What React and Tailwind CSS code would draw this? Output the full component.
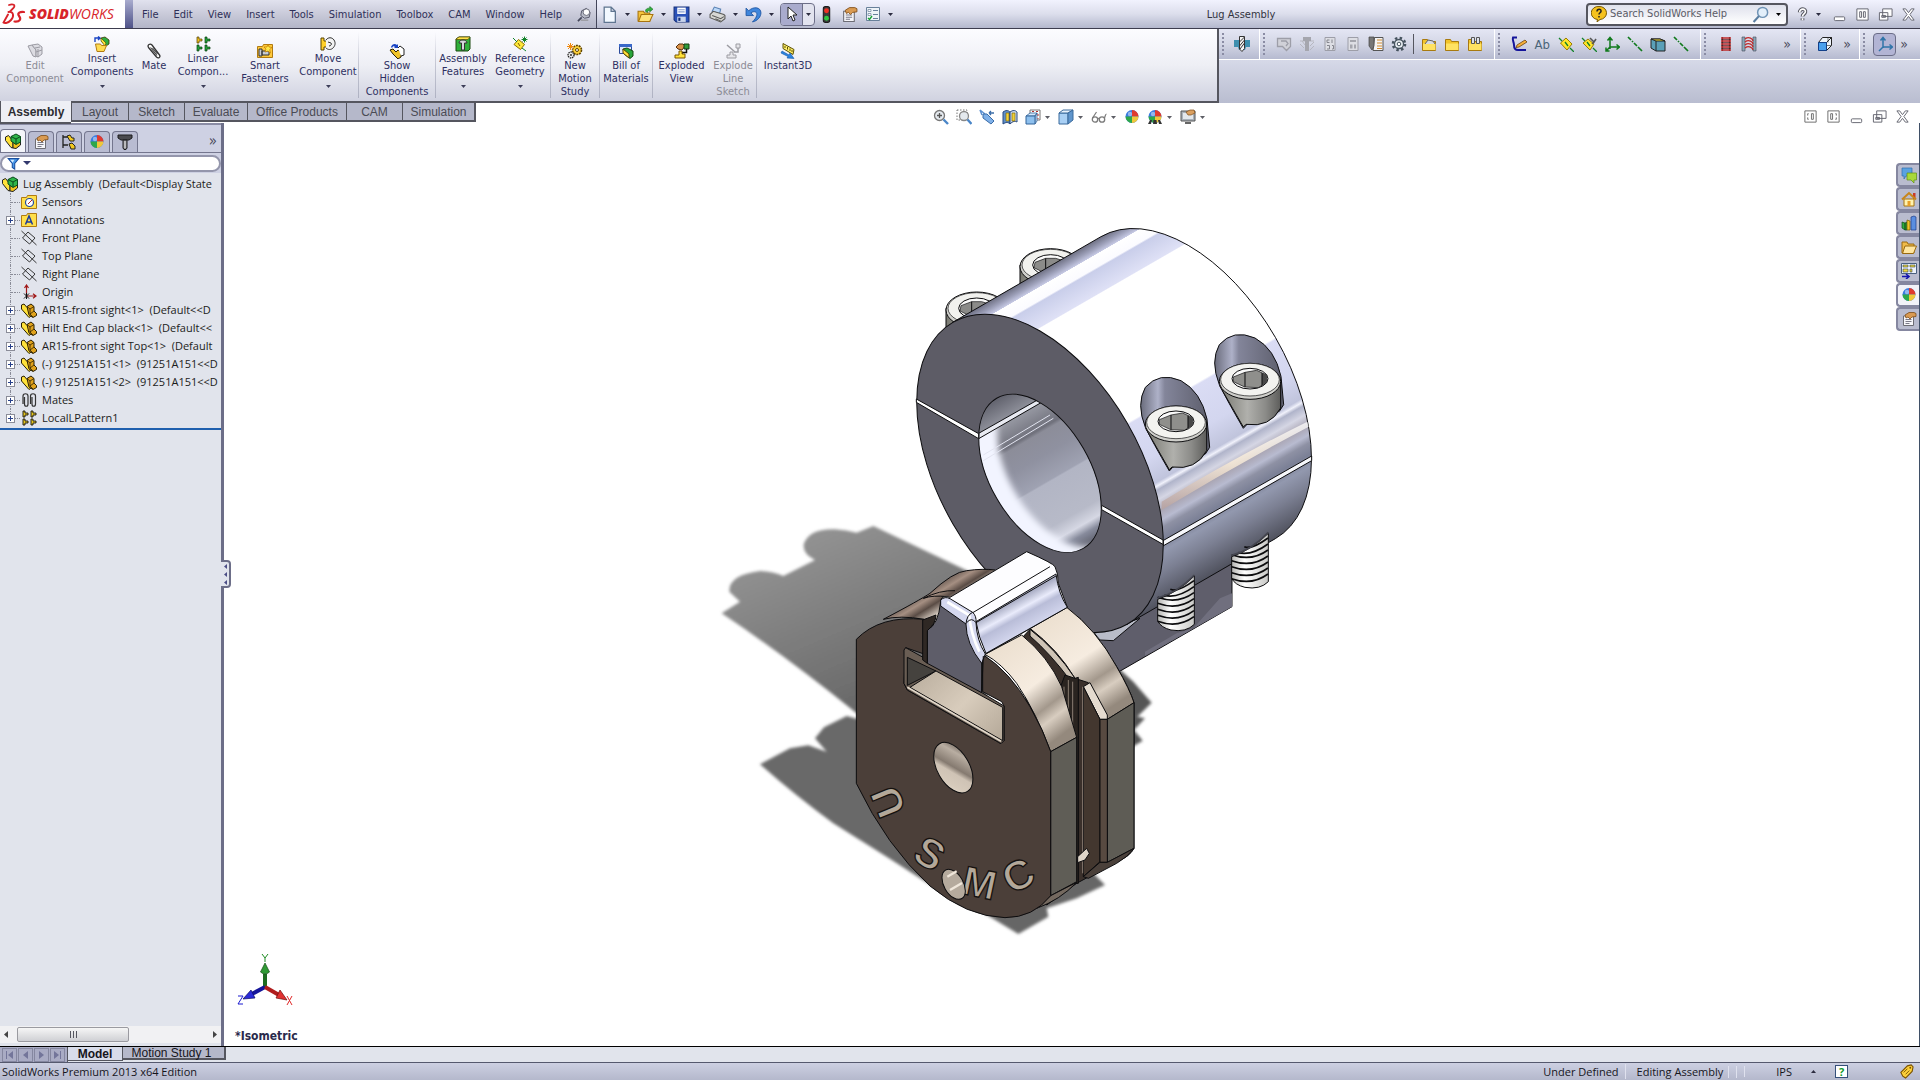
import React from "react";

const sansUi = "font-['DejaVu_Sans_Condensed','DejaVu_Sans',sans-serif]";

function Icon({ children, className = "h-4 w-4" }) {
  return (
    <svg viewBox="0 0 16 16" className={className} aria-hidden="true" fill="none" stroke="none">
      {children}
    </svg>
  );
}

function Caret({ className = "text-[#2c2c40]" }) {
  return (
    <svg viewBox="0 0 5 3" className={"h-[3px] w-[5px] shrink-0 " + className} aria-hidden="true">
      <path d="M0 0h5L2.500 3z" fill="currentColor" />
    </svg>
  );
}

const folder = (
  <>
    <path d="M1.500 3.500h5l1 2h7v9h-13z" fill="#f2c42a" stroke="#a87a10" />
    <path d="M2 7.500h12.500v6.500H2z" fill="#ffe262" />
  </>
);

const part = (
  <>
    <path d="M.5 3l2.500-1 3 3.500L9 8l1 6-2 1.500L.5 7z" fill="#ffe23a" stroke="#2b2000" />
    <path d="M6 4.500L10 2l3 2.500V9l2.500 2.500v2L12 15.500 8 13z" fill="#e0a21c" stroke="#2b2000" />
    <path d="M6 4.500l3 2.500 4-2.500M9 7v5l3 3M9 12l4-3" stroke="#2b2000" strokeWidth=".8" />
  </>
);

const assembly = (
  <>
    <path d="M.5 4l3-1.500L8 8v7l-2-.5L.5 7.500z" fill="#ffe13a" stroke="#222" />
    <path d="M8 9l4-1 3.500-2v6L11 15.500 8 15z" fill="#f2c21c" stroke="#222" />
    <path d="M6 3.500l5-2.500 4.500 2.500V9L11 11.500 6 8z" fill="#2fb54a" stroke="#0b4b1b" />
    <path d="M6 3.500l5 2.500 4.500-2.500M11 6v5" stroke="#0b4b1b" />
  </>
);

const ball = (
  <>
    <circle cx="8" cy="7.500" r="6.500" fill="#3a7be0" />
    <path d="M8 7.500V1a6.500 6.500 0 0 1 6.500 6.500z" fill="#e03a2e" />
    <path d="M8 7.500H1.500A6.500 6.500 0 0 0 8 14z" fill="#2ea84a" />
    <path d="M8 7.500h6.500A6.500 6.500 0 0 1 8 14z" fill="#f0c83a" />
    <circle cx="6" cy="5" r="2.200" fill="#fff" opacity=".45" />
  </>
);

const hand = (
  <>
    <path d="M2.500 5h10v9.500h-10z" fill="#f6f6fa" stroke="#6c6c74" />
    <path d="M4.500 8.500h6M4.500 10.500h6M4.500 12.500h4" stroke="#7a7a88" />
    <path d="M4 4l4-2.500h5l2 1v3l-4 .5-2 2-2-2-2 1z" fill="#d99a52" stroke="#7d4c18" strokeWidth=".8" />
  </>
);

const pattern = (a, b) => (
  <>
    <path d="M2 1h2v2h3v2H4v2H2z" fill={a} stroke="#4b3b00" strokeWidth=".7" />
    <path d="M10 1h2v2h3v2h-3v2h-2z" fill={b} stroke="#0a4010" strokeWidth=".7" />
    <path d="M2 9h2v2h3v2H4v2H2z" fill={b} stroke="#0a4010" strokeWidth=".7" />
    <path d="M10 9h2v2h3v2h-3v2h-2z" fill={b} stroke="#0a4010" strokeWidth=".7" />
  </>
);

const icons = {
  editComp: (
    <g stroke="#9b9ba3" fill="#dcdce2">
      <path d="M1 3l4-1 4 5v7l-3-1z" />
      <path d="M5 2l6-1 4 3v7l-4 3-2-1V7z" />
      <path d="M8 5l5-1M11 6v8M9 9l6-2" />
    </g>
  ),
  insertComp: (
    <>
      <path d="M1 6V2h4M4 .5L6 2 4 4" stroke="#1b45c4" strokeWidth="1.400" />
      <path d="M7 2l4-1 4 3v4l-3 2-4-4z" fill="#2fae3e" stroke="#3c3600" strokeWidth=".8" />
      <path d="M7 2l5 5-1 3-4-5z" fill="#ffe53a" stroke="#3c3600" strokeWidth=".6" />
      <path d="M1.500 8h5l1 1.500h5L10 15.500H3z" fill="#ffdc52" stroke="#b27c12" />
    </>
  ),
  clip: (
    <>
      <path d="M2.500 4.500l8 9.500c2 2 4.500 0 3-2L6 2C4 0 1 2 2.500 4.500z" fill="#fff" stroke="#333" strokeWidth="1.300" />
      <path d="M4.500 4.500l6.500 8M6.500 5l5 6" stroke="#444" strokeWidth="1.100" />
    </>
  ),
  linear: pattern("#f0c020", "#22a03a"),
  fasteners: (
    <>
      <path d="M.5 3.500h5l1-2h9v13h-15z" fill="#ffc93a" stroke="#b07a10" />
      <path d="M2 6h3v7H2zM5 8h7v4H5z" fill="#c8ccd2" stroke="#333" />
      <path d="M11 1l1 3 3 .5-2.300 2L13.500 10 11 8 8 9l1-3-2-2h3z" fill="#ffe94a" stroke="#c07a00" strokeWidth=".7" />
    </>
  ),
  move: (
    <>
      <path d="M1 2h3v3h3v6H4v3H1z" fill="#ffd02a" stroke="#5b4400" />
      <path d="M6 4c2-3 6-3 8 0s1 6-1 8-5 2-7 0M8 6l3 1c1 1 0 3-2 3" fill="#f2f2f2" stroke="#333" />
    </>
  ),
  showHidden: (
    <>
      <path d="M2 4c1-3 4-4 6-2l1-1v4H5l1-1C5 3 4 3 3 5z" fill="#1b45c4" />
      <path d="M1 7l3-1 3 3 2-2 3 2v5l-3 2-5-5z" fill="#f0c428" stroke="#2b2000" />
      <path d="M9 5l2-2 4 3v6l-3 1" fill="#fff" stroke="#222" />
    </>
  ),
  asmFeatures: (
    <>
      <path d="M1 3l3-2h11v12l-2 2H1z" fill="#2fb03a" stroke="#1c4a10" />
      <path d="M1 3l3-2h11l-2 2.500H1z" fill="#ffe34a" stroke="#5b4b00" strokeWidth=".7" />
      <path d="M4 7c0-4 8-4 8 0H9.500v7h-3V7z" fill="#d5d8dc" stroke="#333" />
    </>
  ),
  refGeom: (
    <>
      <path d="M6.500 3.500l6 5-4 5-6.500-5z" fill="#ffe83a" stroke="#8a6c00" />
      <path d="M1 2l4 4M10 12l4 3M12.500.5v6M9.500 3.500h6M10.500 1.500l4 4M14.500 1.500l-4 4" stroke="#12822a" />
      <path d="M6 7l2 3" stroke="#7a5c00" />
    </>
  ),
  motion: (
    <>
      <circle cx="10" cy="7" r="4.500" fill="#ffd23a" stroke="#5f4500" strokeWidth="1.600" strokeDasharray="2 .8" />
      <circle cx="10" cy="7" r="1.500" fill="#fff" stroke="#5f4500" />
      <circle cx="4" cy="12" r="3" fill="#ececec" stroke="#222" strokeWidth="1.300" strokeDasharray="1.500 .7" />
      <circle cx="4" cy="12" r="1" fill="#333" />
      <path d="M3.500 0v7M0 3.500h7M1 1l5 5M6 1L1 6" stroke="#f08a10" />
    </>
  ),
  bom: (
    <>
      <path d="M1.500 1.500h12v9h-12z" fill="#dfe8fb" stroke="#2a4a9a" />
      <path d="M1 1h13v3H1z" fill="#3a68c8" />
      <path d="M5 6l4-1 6 3v5l-3 2.500L6 11z" fill="#27a53a" stroke="#174a10" />
      <path d="M5 6l6 5v4L5 10z" fill="#ffe03a" stroke="#5b4400" />
    </>
  ),
  exploded: (
    <>
      <path d="M2 4l3-3h4l2 2-3 4-4-1z" fill="#d9924a" stroke="#5a300c" />
      <path d="M10 1h5v5h-5z" fill="#2f9a3a" stroke="#143f10" />
      <path d="M12.500 6v3.500H8V13" stroke="#111" strokeWidth="1.500" />
      <path d="M5 8h3v3h3v4H1v-3h4z" fill="#ffe23a" stroke="#7a5600" />
    </>
  ),
  explodeLine: (
    <g stroke="#9c9ca2" fill="#e6e6ea">
      <path d="M11 1h4v4h-4zM5 9h3v3h3v3H2v-3h3z" />
      <path d="M2 2l8 7M13 5v4H9" fill="none" strokeWidth="1.500" />
    </g>
  ),
  instant: (
    <>
      <path d="M3 .5l11 6-1 5-10-6z" fill="#fff06a" stroke="#5c5000" />
      <path d="M5 3v2M7.500 4v2.500M10 5.500v2.500M12 7v2" stroke="#5c5000" />
      <path d="M2 8l7 4 1-2 4 5.500-7-.5 1-1.500L1 10z" fill="#2c84e0" stroke="#1056a8" strokeWidth=".6" />
    </>
  ),
  newDoc: <path d="M3 1h6.500L13.500 5v10.500H3zM9.500 1v4h4" fill="#f2f8ff" stroke="#5f7590" strokeWidth="1.200" />,
  open: (
    <>
      <path d="M1 5h5l1 1.500h5V14H1z" fill="#f5c33a" stroke="#a8740e" />
      <path d="M4 8h11l-3 6.500H1.500z" fill="#ffe27a" stroke="#a8740e" />
      <path d="M8 5c0-3 3-3 4-3V.5L15 3l-3 2.500V4c-2 0-2 1-2 2z" fill="#35b040" stroke="#147020" strokeWidth=".6" />
    </>
  ),
  save: (
    <>
      <path d="M1 1h14v14H3l-2-2z" fill="#2b52b8" stroke="#16307a" />
      <path d="M4 1.500h8v6H4z" fill="#fff" />
      <path d="M5 3.500h6M5 5.500h6" stroke="#8aa0d0" />
      <path d="M4 10h8v5H4z" fill="#c9d4ea" />
      <path d="M5 11h2v3H5z" fill="#16307a" />
    </>
  ),
  print: (
    <>
      <path d="M3 5l2-4 6 2-1 4z" fill="#bcd8f8" stroke="#5b83b5" />
      <path d="M1 8l3-3 10 3 1 1v3l-4 3-10-4z" fill="#d8d8d4" stroke="#5a5a58" />
      <path d="M3 9l8 3 3-2M6 12l5 2" stroke="#5a5a58" />
    </>
  ),
  undo: <path d="M1 2v7h7L5.500 6.500C9 4 12 6 11 9c-.5 2-2 4-4 6 5-1 8-5 8-8.500C15 1 8 0 3.500 4.500z" fill="#3f86dc" stroke="#1b539f" strokeWidth=".8" />,
  cursor: <path d="M4 1v12l3-3 2 5 2-1-2-5h4z" fill="#fff" stroke="#222" />,
  light: (
    <>
      <rect x="5" y=".5" width="6" height="15" rx="2" fill="#3a3a3a" stroke="#1a1a1a" />
      <circle cx="8" cy="4.500" r="2.300" fill="#f03024" />
      <circle cx="8" cy="11.500" r="2.300" fill="#2ec840" />
    </>
  ),
  hand,
  options: (
    <>
      <path d="M1.500 1.500h13v13h-13z" fill="#eef3f8" stroke="#68809a" />
      <path d="M3 3.500h3v2H3zM3 7.500h3v2H3z" fill="#fff" stroke="#68809a" strokeWidth=".7" />
      <path d="M8 4.500h5M8 8.500h5M8 12.500h5" stroke="#68809a" />
      <path d="M3 12l1.500 1.500L7 10" stroke="#16a030" strokeWidth="1.400" />
    </>
  ),
  pin: (
    <>
      <path d="M5 4l5-2.500L14 6l-1 5-5 1-4-3z" fill="#b9bcc8" stroke="#55586a" />
      <path d="M1 15l4-4" stroke="#44475a" strokeWidth="1.800" />
      <circle cx="10" cy="5.500" r="3.500" fill="#fff" stroke="#666978" />
      <path d="M4 14h8" stroke="#888" />
    </>
  ),
  drill: (
    <>
      <path d="M0 4h16v7h-4l-1 3H5l-1-3H0z" fill="#3e8fae" />
      <path d="M5.500.5h5v12L8 15.500 5.500 13z" fill="#f4f4f4" stroke="#333" />
      <path d="M5.500 6l5-5M5.500 10l5-6M6 13l4.500-6" stroke="#333" />
    </>
  ),
  g1: <path d="M1.500 2.500h13v8l-4 4-4-4h-5zM5 5h5l2 2.500-2 2.500" fill="#d0d1d8" stroke="#9d9ea8" strokeWidth="1.300" />,
  g2: (
    <>
      <path d="M1 5h14M1 8l4 4M3 5l3 4M11 10l4-4M11 14l4-4" stroke="#b6b7c0" />
      <path d="M4 1h8v4h-2v10H6V5H4z" fill="#a5a6ae" />
    </>
  ),
  g3: (
    <>
      <path d="M3 1.500h10v13H3z" fill="#dddee4" stroke="#9d9ea8" />
      <path d="M5 4h2.500M5 4v2.500h2.500M10 3.500v3.500M5 9.500h2.500V13H5M10 9.500h1.500V13H10" stroke="#85868e" />
    </>
  ),
  g4: (
    <>
      <path d="M3 1.500h10v13H3z" fill="#dddee4" stroke="#9d9ea8" />
      <path d="M5 4h6v2H5zM5 8.500h2.500v4H5zM9 8.500h2v4H9z" fill="#a5a6ae" />
    </>
  ),
  g5: (
    <>
      <path d="M6.500 1.500h8.500v13H5z" fill="#f4f4f4" stroke="#555" />
      <path d="M9 4h5M9 7h5M9 10h5M9 12.500h5" stroke="#d08a30" />
      <path d="M1 1h5v9l-2 4-3-4z" fill="#777" stroke="#444" strokeWidth=".7" />
    </>
  ),
  gear: (
    <>
      <circle cx="8" cy="8" r="6" stroke="#45525e" strokeWidth="2.600" strokeDasharray="2.400 2.300" />
      <circle cx="8" cy="8" r="4.500" fill="#e8eef2" stroke="#45525e" strokeWidth="1.300" />
      <circle cx="8" cy="8" r="1.800" fill="#fff" stroke="#45525e" />
    </>
  ),
  folder1: (
    <>
      {folder}
      <path d="M4 8l3-4 5 1 2 3" fill="#d8dbe0" stroke="#666" />
    </>
  ),
  folder2: folder,
  folder3: (
    <>
      {folder}
      <path d="M4.500 1.500h3v6h-3zM9.500 1.500h3v6h-3z" fill="#dfe3ea" stroke="#555" />
    </>
  ),
  sketch: (
    <>
      <path d="M6 1.500H2C1 4 3 6 3 9s1 5 4 5h8" stroke="#14149a" strokeWidth="2" />
      <path d="M6 9l8-5 2 2-8 5-3 .5z" fill="#f5b03a" stroke="#5a3000" strokeWidth=".7" />
    </>
  ),
  plane: (
    <>
      <path d="M8 2l6 6-5 6-6.500-7z" fill="#ffe62a" stroke="#9a7a00" />
      <path d="M1 2l3 3M12 12l4 4M7 6l3 4" stroke="#12822a" strokeWidth="1.300" />
    </>
  ),
  plane2: (
    <>
      <path d="M7 3l6 5-4 6-7-7z" fill="#ffe62a" stroke="#9a7a00" />
      <path d="M1 2l3 3M12 12l4 4M6 6l3 4" stroke="#12822a" strokeWidth="1.300" />
      <path d="M9 2l4 4 2-3M13 6l-2 2" stroke="#555" strokeWidth="1.600" />
    </>
  ),
  axes: <path d="M6 13V2M3.500 4.500L6 1.500l2.500 3M6 11h9M12.500 8.500L15.500 11l-3 2.500M6 11l-4 4M2 11.500V15h3.500" stroke="#107a1c" strokeWidth="1.500" />,
  line: <path d="M1 1l3 3M5 5l1 1M7 7l3 3M11 11l1 1M12 12l3 3" stroke="#107a1c" strokeWidth="1.700" />,
  cube: (
    <>
      <path d="M1 3h9l5 2v10H6L1 12z" fill="#5aa0b8" stroke="#222" />
      <path d="M1 3h9l5 2H6z" fill="#ffe83a" stroke="#222" />
      <path d="M6 5v10" stroke="#222" />
    </>
  ),
  spring: (
    <>
      <path d="M4.500 1v14M11.500 1v14" stroke="#333" strokeWidth="1.200" />
      <path d="M3 2h10M3 5h10M3 8h10M3 11h10M3 14h10" stroke="#c02a2a" strokeWidth="1.300" />
      <path d="M3 3.500h10M3 6.500h10M3 9.500h10M3 12.500h10" stroke="#5a2020" strokeWidth=".7" />
    </>
  ),
  spring2: (
    <>
      <path d="M1 1h3v14H1zM12 1h3v14h-3z" fill="#8aa8b8" stroke="#445" strokeWidth=".6" />
      <path d="M4 3c4-3 8 0 8 2M4 6c4-3 8 0 8 2M4 9c4-3 8 0 8 2M4 12c4-3 8 0 8 2" stroke="#c02a2a" strokeWidth="1.300" />
    </>
  ),
  blueCube: (
    <>
      <path d="M1.500 6.500l4-5h9l-5 5zM14.500 1.500v8l-5 5v-8z" fill="#eef4fc" stroke="#222" />
      <path d="M1.500 6.500h8v8h-8z" fill="#4aa0ee" stroke="#12408a" />
      <path d="M9.500 9.500h5M11 1.500v5" stroke="#444" strokeWidth=".7" />
    </>
  ),
  axesBlue: <path d="M6 12V2M3.500 4.500L6 1.500l2.500 3M6 11h9M12.500 8.500L15.500 11l-3 2.500M6 11l-4 4" stroke="#2f74a8" strokeWidth="1.500" />,
  search: (
    <>
      <circle cx="10" cy="6" r="4.700" fill="#e3effa" stroke="#6f93b5" strokeWidth="1.400" />
      <path d="M6.500 9.500L1.500 15" stroke="#5a7ea0" strokeWidth="2" />
    </>
  ),
  zoomFit: (
    <>
      <circle cx="6.500" cy="6.500" r="5" fill="#e4e9ee" stroke="#777" strokeWidth="1.300" />
      <path d="M10.500 10.500l4.500 4.500" stroke="#4a86c8" strokeWidth="2.400" />
      <path d="M4 6.500h5M6.500 4v5" stroke="#555" strokeWidth="1.300" />
    </>
  ),
  zoomArea: (
    <>
      <path d="M1 1h10v10H1z" stroke="#777" strokeDasharray="1.500 1.500" />
      <circle cx="8" cy="7" r="4.500" fill="#e4e9ee" stroke="#888" strokeWidth="1.300" />
      <path d="M11.500 10.500l4 4.500" stroke="#4a86c8" strokeWidth="2.400" />
    </>
  ),
  prev: (
    <>
      <path d="M1 1l5 4M1 1l2 5" stroke="#5b8fd0" strokeWidth="1.500" />
      <path d="M4 5l4 0 7 7-3 3-8-6z" fill="#7fb0e8" stroke="#3a6ca8" />
      <path d="M10 4h5M10 4l2-2M10 4l2 2" stroke="#3a6ca8" strokeWidth="1.300" />
    </>
  ),
  section: (
    <>
      <path d="M1 3c3-2 5-2 7 0v12c-2-2-4-2-7 0z" fill="#5f8fc8" stroke="#284a80" />
      <path d="M8 3c3-2 5-2 7 0v10c-2-1-4-1-7 2z" fill="#c8d8ea" stroke="#284a80" />
      <path d="M4 4h3v8H4zM10 4h3v8h-3z" fill="#f0d23a" stroke="#775c00" strokeWidth=".6" />
    </>
  ),
  orient: (
    <>
      <path d="M5 5V1h10v10h-4" fill="#fff" stroke="#777" />
      <path d="M1 7l4-3h7l-2 3zM10 7l2-3v8l-2 3z" fill="#d4e8fb" stroke="#33649a" strokeWidth=".8" />
      <path d="M1 7h9v8H1z" fill="#8ec0ee" stroke="#33649a" />
      <path d="M7 2.500h2M11 2.500h2M13 5v2M13 9v1" stroke="#b03030" />
    </>
  ),
  shade: (
    <>
      <path d="M1 4h9v11H1z" fill="#a9d0f5" stroke="#3a6a9c" />
      <path d="M1 4l4-3h10l-5 3z" fill="#e8f3fd" stroke="#3a6a9c" />
      <path d="M15 1v10l-5 4V4z" fill="#5f95cc" stroke="#3a6a9c" />
    </>
  ),
  glasses: (
    <>
      <circle cx="4" cy="10.500" r="2.700" stroke="#7a7a7a" strokeWidth="1.300" />
      <circle cx="11" cy="10.500" r="2.700" stroke="#7a7a7a" strokeWidth="1.300" />
      <path d="M6.500 10c1-1 1-1 2 0M1.500 9l4-6M13.500 9c1-3 1-4 2-4" stroke="#7a7a7a" strokeWidth="1.200" />
    </>
  ),
  ball,
  scene: (
    <>
      {ball}
      <path d="M1 15l2-4h2l-1 4zM6 15l.5-4h3l.5 4zM12 15l-1-4h2l2 4z" fill="#333" />
    </>
  ),
  viewSet: (
    <>
      <path d="M1 2h14v10H1z" fill="#aab2ba" stroke="#555" />
      <path d="M3 4h10v6H3z" fill="#e4e8ec" />
      <path d="M5 13h6v2H5z" fill="#666" />
      <path d="M6 3l4-2h4l1 3-4 2-3 0z" fill="#dba060" stroke="#7d4c18" strokeWidth=".7" />
    </>
  ),
  assembly,
  config: (
    <>
      <path d="M2 1v13M2 3h5M2 11h5" stroke="#222" strokeWidth="1.300" />
      <path d="M6 2l3-1 2 3 2 0v3H9zM8 10l3-1 3 3v3h-4z" fill="#f2c81e" stroke="#222" />
    </>
  ),
  screw: (
    <>
      <path d="M1 1h14v3l-3 2H4L1 4z" fill="#4a4a4e" stroke="#1c1c1e" />
      <path d="M6 6h4v8l-1 1.500H7L6 14z" fill="#8c8c90" stroke="#1c1c1e" />
      <path d="M8 7v7" stroke="#e8e8e8" />
    </>
  ),
  funnel: (
    <>
      <path d="M1.500 2h13L9.500 8v7l-3-2V8z" fill="#4a9aea" stroke="#1a4fa0" strokeWidth="1.300" />
      <path d="M4 3.500h5L7 7z" fill="#d5ebff" />
    </>
  ),
  sensors: (
    <>
      <path d="M.5 3.500h5l1-2h9v13h-15z" fill="#ffdf4a" stroke="#b07a10" />
      <circle cx="8.500" cy="8.500" r="4" fill="#fff" stroke="#234a9a" strokeWidth="1.200" />
      <path d="M7 10l4-4" stroke="#b02020" />
    </>
  ),
  annotations: (
    <>
      <path d="M.5 3.500h5l1-2h9v13h-15z" fill="#ffdf4a" stroke="#b07a10" />
      <path d="M4.500 12.500L8 4l3.500 8.500M5.500 10h5" stroke="#1c3c9a" strokeWidth="1.500" />
    </>
  ),
  planeTree: <path d="M7 2l7 6-5.500 6L1.500 8zM.5 1l15 14" stroke="#222" strokeWidth=".9" strokeDasharray="none" />,
  origin: (
    <>
      <path d="M5.500 12V2M3.500 4l2-3 2 3M5.500 12H14M12 9.800l3 2.200-3 2.200" stroke="#a01818" strokeWidth="1.200" />
      <path d="M3 9.500l5 5M8 9.500l-5 5M5.500 9v6" stroke="#111" />
    </>
  ),
  part,
  mates: (
    <path d="M2 12V4c0-3 5-3 5 0v8c0 3-3.500 3-3.500 0V5M9.500 12V4c0-3 5-3 5 0v8c0 3-3.500 3-3.500 0V5" stroke="#333" strokeWidth="1.200" />
  ),
  lpattern: (
    <g fill="#e6c620" stroke="#111" strokeWidth=".9">
      <path d="M2 1h2v2h3v2H4v2H2zM10 1h2v2h3v2h-3v2h-2zM2 9h2v2h3v2H4v2H2zM10 9h2v2h3v2h-3v2h-2z" />
    </g>
  ),
  chat: (
    <>
      <path d="M1 1h10v8H5l-2 3V9H1z" fill="#5aa2e0" stroke="#2f6fae" strokeWidth=".7" />
      <path d="M6 6h9.500v7H13v3l-3-3H6z" fill="#a9d83a" stroke="#5f9010" strokeWidth=".7" />
    </>
  ),
  home: (
    <>
      <path d="M12 2h2.500v6H12z" fill="#c83a2a" />
      <path d="M3 8h10v7H3z" fill="#fff3b0" stroke="#a8740e" />
      <path d="M1 8.500L8 2l7 6.500" stroke="#c8861a" strokeWidth="2" />
      <path d="M6.500 10h3v5h-3z" fill="#e8a028" />
    </>
  ),
  library: (
    <>
      <path d="M1 7l3 1v7l-3-2zM4 8l2-1v8H4z" fill="#2fae3e" stroke="#124a18" strokeWidth=".7" />
      <path d="M6 5l3 1v9H6z" fill="#f0c428" stroke="#775c00" strokeWidth=".7" />
      <path d="M10 2l3-1 2 1v13h-5z" fill="#5a8ee0" stroke="#1c3c8a" strokeWidth=".7" />
    </>
  ),
  openFolder: (
    <>
      <path d="M1 3h5l1 2h6v9H1z" fill="#f0bb4a" stroke="#9a6a10" />
      <path d="M4 7h11.500l-3 7.500H1.500z" fill="#ffe6a0" stroke="#9a6a10" />
    </>
  ),
  palette: (
    <>
      <path d="M.5.5h15v10H.5z" fill="#eef3fb" stroke="#4a6080" />
      <path d="M2 2h5v2H2zM2 6h5v3H2zM9 2h5v2H9zM9 6h2v3H9z" fill="#f0d83a" stroke="#345" strokeWidth=".6" />
      <path d="M1 13.500h6M5 11l3 2.500L5 16" stroke="#1414b0" strokeWidth="1.600" />
    </>
  ),
  tag: (
    <>
      <path d="M2 9l7-7 4-1 2 2-1 5-7 7-3-2z" fill="#ffd23a" stroke="#7a5200" strokeWidth="1.200" />
      <path d="M5 9l4-4M7 11l4-4" stroke="#7a5200" />
      <circle cx="12" cy="4" r="1" fill="#7a5200" />
    </>
  ),
  winMin: <rect x="2.500" y="10.500" width="11" height="4" rx="1" fill="#fff" stroke="#62636e" />,
  winTile: <path d="M2 2h12v12H2zM5 5h2v6H5zM9 5h2v6H9z" fill="#fff" stroke="#62636e" />,
  winRestore: <path d="M5 2h10v8H5zM1.500 6h9v8h-9zM4 9h4v2H4z" fill="#fff" stroke="#62636e" />,
  winClose: <path d="M2 2h3l3 4 3-4h3l-4.500 6 4.500 6h-3l-3-4-3 4H2l4.500-6z" fill="#fff" stroke="#62636e" />,
  dockL: <path d="M2 2h12v12H2zM6 5H5v2M6 11H5V9M9 5h2v6H9z" fill="#fff" stroke="#6a6a6a" />,
  dockR: <path d="M2 2h12v12H2zM5 5h2v6H5zM10 5h1v2M10 11h1V9" fill="#fff" stroke="#6a6a6a" />,
};

const menus = ["File", "Edit", "View", "Insert", "Tools", "Simulation", "Toolbox", "CAM", "Window", "Help"];

const quick = [
  ["newDoc", "New"],
  ["open", "Open"],
  ["save", "Save"],
  ["print", "Print"],
  ["undo", "Undo"],
];

function TitleBar() {
  return (
    <header className="flex h-[29px] shrink-0 items-center border-b border-[#3c3c4e] bg-gradient-to-b from-[#f1f2fe] via-[#dcdeec] to-[#b4b8cd]">
      <div className="flex h-full w-[125px] shrink-0 items-center bg-white pl-[2px]">
        <svg viewBox="0 0 24 22" className="h-[22px] w-6 shrink-0" aria-hidden="true" fill="none" stroke="#d8232a" strokeLinecap="round">
          <path d="M7 2c4-1.500 7 0 4.500 3L8 8.500" strokeWidth="1.800" />
          <path d="M6.500 9c5-1 6 4 2.500 8s-7 3-7.500 2.500L6 11.500" strokeWidth="1.900" />
          <path d="M22 9c-4-.5-7 1-5 4 2.500 3 1 6-4.500 5.500" strokeWidth="2.200" />
        </svg>
        <span className="ml-[3px] font-['Open_Sans',sans-serif] text-[14px] leading-none text-[#d8232a] italic">
          <b className="font-extrabold">SOLID</b>WORKS
        </span>
      </div>
      <div className="h-full w-2 shrink-0 bg-gradient-to-b from-[#a9acce] to-[#4f5288]" />
      <nav className="flex h-full shrink-0 items-center gap-[15px] border-r border-[#44465a] bg-gradient-to-b from-[#e1e2ee] via-[#c9cad9] to-[#b3b5c8] pr-1 pl-[9px] text-[11px] text-[#2e3058]">
        {menus.map((m) => (
          <button key={m} type="button" className="leading-none">
            {m}
          </button>
        ))}
        <button type="button" aria-label="Pin menu">
          <Icon className="h-[15px] w-[15px]">{icons.pin}</Icon>
        </button>
      </nav>
      <div className="flex shrink-0 items-center pl-[3px]">
        {quick.map(([k, label]) => (
          <React.Fragment key={k}>
            <button type="button" aria-label={label} className="flex w-[18px] justify-center">
              <Icon className="h-[17px] w-[17px]">{icons[k]}</Icon>
            </button>
            <button type="button" aria-label={label + " options"} className="flex h-4 w-[18px] items-center justify-center">
              <Caret />
            </button>
          </React.Fragment>
        ))}
        <div className="flex h-[23px] items-center rounded-[4px] border border-[#6c6e88] bg-[#e2e3ef]">
          <button type="button" aria-label="Select" className="flex h-full w-[22px] items-center justify-center rounded-l-[3px] border-r border-[#6c6e88] bg-[#a9abcd]">
            <Icon>{icons.cursor}</Icon>
          </button>
          <button type="button" aria-label="Select options" className="flex h-full w-[11px] items-center justify-center">
            <Caret />
          </button>
        </div>
        <button type="button" aria-label="Rebuild" className="flex w-[23px] justify-center">
          <Icon className="h-[17px] w-[17px]">{icons.light}</Icon>
        </button>
        <button type="button" aria-label="File properties" className="flex w-[23px] justify-center">
          <Icon className="h-[17px] w-[17px]">{icons.hand}</Icon>
        </button>
        <button type="button" aria-label="Options" className="flex w-[23px] justify-center">
          <Icon className="h-4 w-4">{icons.options}</Icon>
        </button>
        <button type="button" aria-label="Customize toolbar" className="flex h-4 w-[12px] items-center justify-center">
          <Caret />
        </button>
      </div>
      <h1 className="flex-1 text-center text-[11px] leading-none text-[#33343e]">Lug Assembly</h1>
      <div className="flex h-[23px] w-[202px] shrink-0 items-center rounded-[4px] border-2 border-[#55565f] bg-gradient-to-b from-[#dfe1ec] to-white px-[3px]">
        <svg viewBox="0 0 16 16" className="h-4 w-4 shrink-0" aria-hidden="true">
          <path d="M8 .5a7 6.500 0 0 1 1 13L6 16l.5-2.500A7 6.500 0 0 1 8 .5z" fill="#f5c21e" stroke="#7a5a00" />
          <path d="M6 5.500c0-3 4.500-3 4 0-.3 1.300-2 1.300-2 3M8 10v1.500" stroke="#222" strokeWidth="1.500" fill="none" />
        </svg>
        <input
          type="text"
          aria-label="Search SolidWorks Help"
          placeholder="Search SolidWorks Help"
          className="ml-[3px] min-w-0 flex-1 bg-transparent text-[11px] outline-none placeholder:text-[#5b5c66]"
        />
        <button type="button" aria-label="Search" className="flex">
          <Icon className="h-[17px] w-[17px]">{icons.search}</Icon>
        </button>
        <button type="button" aria-label="Search scope" className="ml-1 flex h-4 w-[10px] items-center justify-center">
          <Caret className="text-black" />
        </button>
      </div>
      <div className="flex shrink-0 items-center pl-[5px]">
        <button type="button" aria-label="Help" className="flex w-[18px] justify-center">
          <svg viewBox="0 0 16 16" className="h-[15px] w-[15px]" aria-hidden="true" fill="none">
            <path d="M5 5.500c0-4.500 7-4 6 0-.5 2-3 2-3 4.500M8 12v2" stroke="#55565f" strokeWidth="4" />
            <path d="M5 5.500c0-4.500 7-4 6 0-.5 2-3 2-3 4.500M8 12v2" stroke="#fff" strokeWidth="1.800" />
          </svg>
        </button>
        <button type="button" aria-label="Help options" className="mr-[2px] flex h-4 w-[15px] items-center justify-center">
          <Caret />
        </button>
        {[
          ["winMin", "Minimize"],
          ["winTile", "Tile"],
          ["winRestore", "Restore"],
          ["winClose", "Close"],
        ].map(([k, l]) => (
          <button key={k} type="button" aria-label={l} className="flex w-[23px] justify-center">
            <Icon className="h-[15px] w-[15px]">{icons[k]}</Icon>
          </button>
        ))}
      </div>
    </header>
  );
}

const ribbon = [
  { k: "editComp", t: ["Edit", "Component"], w: "w-[70px]", off: true },
  { k: "insertComp", t: ["Insert", "Components"], w: "w-[64px]", drop: true },
  { k: "clip", t: ["Mate"], w: "w-[40px]" },
  { k: "linear", t: ["Linear", "Compon..."], w: "w-[58px]", drop: true },
  { k: "fasteners", t: ["Smart", "Fasteners"], w: "w-[66px]" },
  { k: "move", t: ["Move", "Component"], w: "w-[60px]", drop: true, sep: true },
  { k: "showHidden", t: ["Show", "Hidden", "Components"], w: "w-[76px]", sep: true },
  { k: "asmFeatures", t: ["Assembly", "Features"], w: "w-[54px]", drop: true },
  { k: "refGeom", t: ["Reference", "Geometry"], w: "w-[60px]", drop: true, sep: true },
  { k: "motion", t: ["New", "Motion", "Study"], w: "w-[48px]", sep: true },
  { k: "bom", t: ["Bill of", "Materials"], w: "w-[52px]", sep: true },
  { k: "exploded", t: ["Exploded", "View"], w: "w-[57px]" },
  { k: "explodeLine", t: ["Explode", "Line", "Sketch"], w: "w-[46px]", off: true, sep: true },
  { k: "instant", t: ["Instant3D"], w: "w-[62px]" },
];

function Ribbon() {
  return (
    <div className="flex w-[63.5%] shrink-0 border-r-2 border-b-2 border-[#55565f] bg-gradient-to-b from-[#fcfcff] via-[#eeeff5] to-[#d0d2e0]">
      {ribbon.map((b) => (
        <React.Fragment key={b.k}>
          <button
            type="button"
            disabled={b.off}
            className={
              "flex shrink-0 flex-col items-center text-center text-[11px] leading-[13px] whitespace-nowrap " +
              b.w +
              (b.drop ? " pt-[7px]" : " pt-[14px]") +
              (b.off ? " text-[#8c8c96]" : " text-[#2e3062]")
            }
          >
            <Icon className="h-4 w-4 shrink-0">{icons[b.k]}</Icon>
            {b.t.map((line) => (
              <span key={line}>{line}</span>
            ))}
            {b.drop && (
              <span className="flex h-[16px] items-center">
                <Caret className="text-[#3c3d58]" />
              </span>
            )}
          </button>
          {b.sep && <div className="my-[3px] w-px shrink-0 bg-gradient-to-b from-transparent via-[#c3c5d2] to-[#aeb1c2]" />}
        </React.Fragment>
      ))}
    </div>
  );
}

function Dots() {
  return <div className="mx-[3px] h-[22px] w-0 shrink-0 border-l-2 border-dotted border-[#8a8ca4]" />;
}

function Tools({ names }) {
  return names.map((k) => (
    <button key={k} type="button" aria-label={k} className="flex w-[23px] shrink-0 justify-center">
      <Icon className="h-4 w-4">{icons[k]}</Icon>
    </button>
  ));
}

function More() {
  return (
    <button type="button" aria-label="More tools" className="flex w-[22px] justify-center text-[14px] leading-none text-[#4a4b5c]">
      »
    </button>
  );
}

function SideToolbars() {
  const group = "flex h-full shrink-0 items-center border-r border-white";
  return (
    <div className="flex min-w-0 flex-1 flex-col">
      <div className="flex h-[31px] shrink-0 items-center overflow-hidden border-b border-white bg-gradient-to-b from-[#e4e6f4] via-[#d3d6e5] to-[#b6bad0]">
        <div className={group + " w-[41px]"}>
          <Dots />
          <div className="pl-[3px]">
            <Tools names={["drill"]} />
          </div>
        </div>
        <div className={group + " w-[235px]"}>
          <Dots />
          <div className="flex items-center pl-1">
            <Tools names={["g1", "g2", "g3", "g4", "g5", "gear"]} />
            <div className="mx-[3px] h-5 w-px bg-[#55565f]" />
            <Tools names={["folder1", "folder2", "folder3"]} />
          </div>
        </div>
        <div className={group + " w-[206px]"}>
          <Dots />
          <div className="flex items-center pl-1">
            <Tools names={["sketch"]} />
            <button type="button" aria-label="Note" className="w-[24px] shrink-0 text-[13px] leading-none text-[#4a6478]">
              Ab
            </button>
            <Tools names={["plane", "plane2", "axes", "line", "cube"]} />
            <button type="button" aria-label="Axis" className="flex w-[23px] shrink-0 justify-center">
              <Icon>{icons.line}</Icon>
            </button>
          </div>
        </div>
        <div className={group + " w-[100px]"}>
          <Dots />
          <div className="flex flex-1 items-center pr-[2px] pl-[5px]">
            <Tools names={["spring", "spring2"]} />
            <div className="ml-auto">
              <More />
            </div>
          </div>
        </div>
        <div className={group + " w-[59px]"}>
          <Dots />
          <div className="flex items-center pl-1">
            <Tools names={["blueCube"]} />
            <More />
          </div>
        </div>
        <div className="flex h-full items-center">
          <Dots />
          <button type="button" aria-label="Coordinate system" className="ml-[5px] flex h-[23px] w-[23px] items-center justify-center rounded-[4px] border border-[#6c6e88] bg-[#b2b4d4]">
            <Icon>{icons.axesBlue}</Icon>
          </button>
          <button type="button" aria-label="More tools" className="flex w-4 justify-center text-[14px] leading-none text-[#4a4b5c]">
            »
          </button>
        </div>
      </div>
      <div className="flex-1 bg-gradient-to-b from-[#d6d9e8] to-[#b9bdd0]" />
    </div>
  );
}

const cmdTabs = [
  ["Layout", "w-[57px]"],
  ["Sketch", "w-[56px]"],
  ["Evaluate", "w-[63px]"],
  ["Office Products", "w-[99px]"],
  ["CAM", "w-[56px]"],
  ["Simulation", "w-[74px]"],
];

const viewTools = [
  ["zoomFit", 0],
  ["zoomArea", 0],
  ["prev", 0],
  ["section", 0],
  ["orient", 1],
  ["shade", 1],
  ["glasses", 1],
  ["ball", 0],
  ["scene", 1],
  ["viewSet", 1],
];

function TabRow() {
  return (
    <div className="relative z-10 flex h-5 shrink-0 items-start bg-white font-['Liberation_Sans',Arial,sans-serif]">
      <div className="flex shrink-0" role="tablist">
        <button
          type="button"
          role="tab"
          aria-selected="true"
          className="-mt-[2px] h-[23px] w-[71px] border-b-2 border-l border-[#55565f] bg-[#eeeff5] text-[12px] leading-none font-bold text-[#2b2b30]"
        >
          Assembly
        </button>
        {cmdTabs.map(([t, w]) => (
          <button
            key={t}
            type="button"
            role="tab"
            aria-selected="false"
            className={"h-[19px] border-b-2 border-l border-[#55565f] bg-[#b5b8ca] text-[12px] leading-none text-[#4a4b54] last:border-r-2 " + w}
          >
            {t}
          </button>
        ))}
      </div>
      <div className="flex flex-1 items-center pt-[6px] pl-[453px]">
        {viewTools.map(([k, d]) => (
          <React.Fragment key={k}>
            <button type="button" aria-label={k} className="flex w-[23px] shrink-0 justify-center">
              <Icon>{icons[k]}</Icon>
            </button>
            {d === 1 && (
              <button type="button" aria-label={k + " options"} className="-ml-1 flex h-4 w-[14px] shrink-0 items-center justify-center">
                <Caret className="text-[#5d5e66]" />
              </button>
            )}
          </React.Fragment>
        ))}
      </div>
      <div className="flex shrink-0 items-center pt-[6px] pr-[6px]">
        {["dockL", "dockR", "winMin", "winRestore", "winClose"].map((k) => (
          <button key={k} type="button" aria-label={k} className="flex w-[23px] justify-center">
            <Icon className="h-[15px] w-[15px]">{icons[k]}</Icon>
          </button>
        ))}
      </div>
    </div>
  );
}

const tree = [
  ["sensors", "Sensors", false],
  ["annotations", "Annotations", true],
  ["planeTree", "Front Plane", false],
  ["planeTree", "Top Plane", false],
  ["planeTree", "Right Plane", false],
  ["origin", "Origin", false],
  ["part", "AR15-front sight<1>  (Default<<D", true],
  ["part", "Hilt End Cap black<1>  (Default<<", true],
  ["part", "AR15-front sight Top<1>  (Default", true],
  ["part", "(-) 91251A151<1>  (91251A151<<D", true],
  ["part", "(-) 91251A151<2>  (91251A151<<D", true],
  ["mates", "Mates", true],
  ["lpattern", "LocalLPattern1", true],
];

function FeatureTree() {
  return (
    <aside className="relative flex w-[224px] shrink-0 flex-col border-r-[3px] border-[#6c6e88] bg-[#e1e4ec]">
      <div className="flex h-[29px] shrink-0 items-end border-t-2 border-[#8a8ca4] bg-[#ced1e3]">
        {["assembly", "hand", "config", "ball", "screw"].map((k, i) => (
          <button
            key={k}
            type="button"
            aria-label={k}
            className={
              "mr-[2px] flex w-[26px] items-center justify-center rounded-t-[4px] border border-b-0 border-[#74768e] " +
              (i === 0 ? "h-[23px] bg-[#f4f5fa]" : "h-[21px] border-b bg-[#b9bcd2]")
            }
          >
            <Icon>{icons[k]}</Icon>
          </button>
        ))}
        <button type="button" aria-label="More tabs" className="mr-1 mb-[3px] ml-auto text-[15px] leading-none text-[#4a4b5c]">
          »
        </button>
      </div>
      <div className="flex h-[21px] shrink-0 items-center border-t border-[#74768e] bg-[#ced1e3]">
        <div className="flex h-[17px] w-full items-center rounded-full border-2 border-[#9496ac] bg-white pl-[5px]">
          <button type="button" aria-label="Filter" className="flex items-center gap-[3px]">
            <Icon className="h-[13px] w-[13px]">{icons.funnel}</Icon>
            <svg viewBox="0 0 8 4" className="h-1 w-2" aria-hidden="true">
              <path d="M0 0h8L4 4z" fill="#33396e" />
            </svg>
          </button>
          <input type="text" aria-label="Filter tree" className="min-w-0 flex-1 bg-transparent text-[11px] outline-none" />
        </div>
      </div>
      <div className="shrink-0 overflow-hidden border-b-2 border-[#1f5fae] pt-[2px] pb-[1px] font-['Open_Sans',sans-serif] text-[11px] leading-[18px] whitespace-pre text-[#1c1c20]">
        <div className="flex h-[18px] items-center gap-[5px] pl-[2px]">
          <Icon className="h-4 w-4 shrink-0">{icons.assembly}</Icon>
          <span>Lug Assembly  (Default&lt;Display State</span>
        </div>
        <ul>
          {tree.map(([k, t, plus], i) => (
            <li key={i} className="flex h-[18px] items-center">
              <span
                className={
                  "ml-[10px] flex w-px shrink-0 items-center self-stretch border-l border-dotted border-[#8a8c98] " +
                  (i === tree.length - 1 ? "mb-[9px]" : "")
                }
              />
              {plus ? (
                <button
                  type="button"
                  aria-label={"Expand " + t.trim()}
                  className="relative -ml-[5px] flex h-[9px] w-[9px] shrink-0 items-center justify-center border border-[#8a8c98] bg-white"
                >
                  <svg viewBox="0 0 5 5" className="h-[5px] w-[5px]" aria-hidden="true">
                    <path d="M0 2h5v1H0zM2 0h1v5H2z" fill="#27408a" />
                  </svg>
                </button>
              ) : (
                <span className="w-[4px] shrink-0 border-t border-dotted border-[#8a8c98]" />
              )}
              <span className="mr-px w-[5px] shrink-0 border-t border-dotted border-[#8a8c98]" />
              <Icon className="h-4 w-4 shrink-0">{icons[k]}</Icon>
              <span className="ml-[5px]">{t}</span>
            </li>
          ))}
        </ul>
      </div>
      <div className="flex-1" />
      <div className="mb-[3px] flex h-[17px] shrink-0 items-center bg-[#f1f1f3] px-[4px]">
        <button type="button" aria-label="Scroll left">
          <svg viewBox="0 0 4 7" className="h-[7px] w-1" aria-hidden="true">
            <path d="M4 0v7L0 3.500z" fill="#444" />
          </svg>
        </button>
        <div className="ml-[9px] flex h-[15px] w-[112px] items-center justify-center gap-[2px] rounded-[2px] border border-[#9a9aa0] bg-gradient-to-b from-[#f6f6f6] to-[#cfd0d4]">
          <i className="h-[7px] w-px bg-[#55565f]" />
          <i className="h-[7px] w-px bg-[#55565f]" />
          <i className="h-[7px] w-px bg-[#55565f]" />
        </div>
        <button type="button" aria-label="Scroll right" className="ml-auto">
          <svg viewBox="0 0 4 7" className="h-[7px] w-1" aria-hidden="true">
            <path d="M0 0v7l4-3.500z" fill="#444" />
          </svg>
        </button>
      </div>
      <button
        type="button"
        aria-label="Collapse panel"
        className="absolute top-[437px] -right-[10px] z-10 flex h-[28px] w-[10px] flex-col items-center justify-center gap-[3px] rounded-r-[4px] border-2 border-l-0 border-[#6c6e88] bg-[#e1e4ec]"
      >
        {[0, 1, 2].map((n) => (
          <svg key={n} viewBox="0 0 3 5" className="h-[5px] w-[3px]" aria-hidden="true">
            <path d="M3 0v5L0 2.500z" fill="#4c4e86" />
          </svg>
        ))}
      </button>
    </aside>
  );
}

function SocketHead({ x, y }) {
  return (
    <g transform={`translate(${x} ${y})`} stroke="#0c0c0e" strokeWidth="3">
      <path d="M-92 0V60A92 54 0 0 0 92 80V0z" fill="url(#head)" />
      <ellipse rx="92" ry="54" cy="5" fill="#cfcfcb" />
      <ellipse rx="86" ry="47" fill="#f1f1ee" strokeWidth="2" />
      <ellipse rx="54" ry="31" fill="#fafafa" />
      <path d="M-47-8L-15-20H15L48-10V14L18 28-16 25-50 8z" fill="#8b8b89" strokeWidth="2" />
      <path d="M-15-20V25M32-14V22" strokeWidth="3" />
      <path d="M32-14L48-10V14L32 22z" fill="#4c4c4c" strokeWidth="1" />
    </g>
  );
}

function Recessed({ x, y }) {
  return (
    <g transform={`translate(${x} ${y})`}>
      <path
        d="M-92 15Q-120-55-92-105Q-50-153 15-125Q75-92 93-10L101 75 88 95 -10 135 -20 146Q-70 60-92 15z"
        fill="url(#bore)"
        stroke="#0c0c0e"
        strokeWidth="3"
      />
      <path d="M-90 20L-20 142-12 134Q60 145 92 85V0H-85z" fill="url(#head)" stroke="#0c0c0e" strokeWidth="3" />
      <ellipse rx="92" ry="54" cy="5" fill="#cfcfcb" stroke="#0c0c0e" strokeWidth="3" />
      <ellipse rx="88" ry="49" fill="#f3f3f0" stroke="#0c0c0e" strokeWidth="2" />
      <ellipse rx="54" ry="31" cy="-3" fill="#fafafa" stroke="#0c0c0e" strokeWidth="3" />
      <path d="M-50-8L-15-22 20-28 50-14V8L25 24-16 22-50 6z" fill="#8f8f8c" stroke="#0c0c0e" strokeWidth="2" />
      <path d="M36-20L50-14V8L36 18z" fill="#484848" />
      <path d="M-15-22V22M36-20V18" stroke="#0c0c0e" strokeWidth="3" />
    </g>
  );
}

function Thread({ x, y }) {
  return (
    <g transform={`translate(${x} ${y})`}>
      <path d="M0 70Q60 50 110 0V145Q85 170 40 162 10 155 0 135z" fill="url(#thread)" stroke="#0c0c0e" strokeWidth="3" />
      {[22, 40, 58, 76, 94, 112, 130].map((d) => (
        <path key={d} d={`M${d < 50 ? 60 - d : 0} ${d + (d < 50 ? 18 : 6)}Q60 ${d + 28} 109 ${d - 8}`} fill="none" stroke="#0c0c0e" strokeWidth="5" />
      ))}
      <path d="M0 66Q60 50 110 -3" fill="none" stroke="#44454f" strokeWidth="5" />
    </g>
  );
}

function Model() {
  const line = { stroke: "#0c0c0e", strokeWidth: 3, strokeLinejoin: "round" };
  const engraved = {
    fontFamily: "Liberation Sans, Arial, sans-serif",
    fontWeight: 700,
    textAnchor: "middle",
    fill: "#b3a899",
    stroke: "#15110f",
    strokeWidth: 4,
  };
  return (
    <svg viewBox="224 123 1695 923" className="h-full w-full" role="img" aria-label="Lug assembly model, isometric view">
      <defs>
        <linearGradient id="body" gradientUnits="userSpaceOnUse" x1="158" y1="337" x2="681" y2="1243">
          <stop offset="0" stopColor="#6f7184" />
          <stop offset=".02" stopColor="#9c9fb8" />
          <stop offset=".036" stopColor="#c6c9e4" />
          <stop offset=".037" stopColor="#ffffff" />
          <stop offset=".07" stopColor="#fbfbff" />
          <stop offset=".075" stopColor="#c9ceea" />
          <stop offset=".137" stopColor="#dfe1f6" />
          <stop offset=".14" stopColor="#ffffff" />
          <stop offset=".5" stopColor="#ffffff" />
          <stop offset=".506" stopColor="#dadcf4" />
          <stop offset=".62" stopColor="#d3d6ef" />
          <stop offset=".69" stopColor="#c0c4dc" />
          <stop offset=".7" stopColor="#f0f1fb" />
          <stop offset=".71" stopColor="#b0b4ca" />
          <stop offset=".735" stopColor="#d5d6e4" />
          <stop offset=".765" stopColor="#aaa6b4" />
          <stop offset=".79" stopColor="#b8bbd0" />
          <stop offset=".81" stopColor="#8e91a4" />
          <stop offset=".84" stopColor="#7b8096" />
          <stop offset=".87" stopColor="#9298ae" />
          <stop offset=".92" stopColor="#7c8093" />
          <stop offset="1" stopColor="#50525e" />
        </linearGradient>
        <linearGradient id="warm" gradientUnits="userSpaceOnUse" x1="780" y1="900" x2="1230" y2="640">
          <stop offset="0" stopColor="#b8a09c" />
          <stop offset=".5" stopColor="#fff0d8" />
          <stop offset="1" stopColor="#ffffff" />
        </linearGradient>
        <linearGradient id="bore" x1="0" y1="0" x2="1" y2="0">
          <stop offset="0" stopColor="#6a6c7c" />
          <stop offset=".25" stopColor="#aeb1c8" />
          <stop offset=".35" stopColor="#83859a" />
          <stop offset="1" stopColor="#5c5d6b" />
        </linearGradient>
        <linearGradient id="hole" gradientUnits="userSpaceOnUse" x1="290" y1="565" x2="550" y2="1015">
          <stop offset="0" stopColor="#61626d" />
          <stop offset=".15" stopColor="#9698a2" />
          <stop offset=".28" stopColor="#70717c" />
          <stop offset=".3" stopColor="#8c8d99" />
          <stop offset=".42" stopColor="#8f91a0" />
          <stop offset=".56" stopColor="#9fa2b2" />
          <stop offset=".57" stopColor="#b2b5c4" />
          <stop offset=".8" stopColor="#b7bac8" />
          <stop offset=".88" stopColor="#d6d8e4" />
          <stop offset=".93" stopColor="#878b9c" />
          <stop offset="1" stopColor="#5d5f6c" />
        </linearGradient>
        <linearGradient id="head" x1="0" y1="0" x2="1" y2="0">
          <stop offset="0" stopColor="#77776f" />
          <stop offset=".45" stopColor="#b0b0ac" />
          <stop offset=".75" stopColor="#8b8b88" />
          <stop offset="1" stopColor="#5d5d5b" />
        </linearGradient>
        <linearGradient id="thread" x1="0" y1="0" x2="1" y2="0">
          <stop offset="0" stopColor="#b5b5b2" />
          <stop offset=".35" stopColor="#ffffff" />
          <stop offset="1" stopColor="#c9c9c6" />
        </linearGradient>
        <linearGradient id="shade" x1="0" y1="0" x2=".6" y2="1">
          <stop offset="0" stopColor="#9c9c9c" />
          <stop offset="1" stopColor="#656565" />
        </linearGradient>
        <linearGradient id="cream" x1="0" y1="0" x2=".6" y2="1">
          <stop offset="0" stopColor="#e9dccb" />
          <stop offset=".55" stopColor="#f6ece0" />
          <stop offset=".75" stopColor="#a3988c" />
          <stop offset=".85" stopColor="#d8cdc0" />
          <stop offset="1" stopColor="#94897d" />
        </linearGradient>
        <linearGradient id="bronze" gradientUnits="userSpaceOnUse" x1="640" y1="270" x2="720" y2="400">
          <stop offset="0" stopColor="#3d3430" />
          <stop offset=".3" stopColor="#a58f82" />
          <stop offset=".45" stopColor="#5a4c45" />
          <stop offset=".7" stopColor="#f2e8dc" />
          <stop offset="1" stopColor="#ab9f92" />
        </linearGradient>
        <linearGradient id="side" gradientUnits="userSpaceOnUse" x1="930" y1="280" x2="990" y2="390">
          <stop offset="0" stopColor="#f4f5fd" />
          <stop offset=".2" stopColor="#a9adc4" />
          <stop offset=".45" stopColor="#e9ebfb" />
          <stop offset=".6" stopColor="#b9bdd8" />
          <stop offset="1" stopColor="#d5d8ef" />
        </linearGradient>
        <linearGradient id="bolt" gradientUnits="userSpaceOnUse" x1="720" y1="740" x2="800" y2="880">
          <stop offset="0" stopColor="#5a5049" />
          <stop offset=".2" stopColor="#b9aea2" />
          <stop offset=".45" stopColor="#857a70" />
          <stop offset=".55" stopColor="#cfc3b5" />
          <stop offset=".75" stopColor="#d6cabb" />
          <stop offset="1" stopColor="#e9dfd2" />
        </linearGradient>
        <linearGradient id="floor" gradientUnits="userSpaceOnUse" x1="680" y1="500" x2="900" y2="720">
          <stop offset="0" stopColor="#bdb1a1" />
          <stop offset=".5" stopColor="#d8ccbc" />
          <stop offset="1" stopColor="#b5a999" />
        </linearGradient>
        <clipPath id="holeClip">
          <ellipse cx="420" cy="790" rx="260" ry="150" transform="rotate(60 420 790)" />
        </clipPath>
        <clipPath id="lower">
          <path d="M200 700L460 550H700V1100H200z" />
        </clipPath>
        <filter id="soft" x="-10%" y="-10%" width="120%" height="120%">
          <feGaussianBlur stdDeviation="4" />
        </filter>
        <filter id="glow" x="-20%" y="-20%" width="140%" height="140%">
          <feGaussianBlur stdDeviation="9" />
        </filter>
      </defs>

      <g transform="translate(700 500) scale(.33333)" filter="url(#soft)">
        <path
          d="M65 340L120 305 88 275Q85 225 180 213 220 215 250 228L345 180Q305 160 312 130 330 85 405 88 440 90 470 98L520 78 860 240V640H470Q260 470 65 340z"
          fill="url(#shade)"
        />
        <path d="M180 793L270 745 325 736 380 755 345 715 372 682 440 648 560 680 800 1200 700 1160 560 1070 400 970Q290 890 180 793z" fill="#696969" />
        <path d="M1250 500L1300 545 1355 608 1312 650 1335 655 1302 690 1328 722 1290 745z" fill="#555" />
        <path d="M820 1220L955 1302 1045 1250 1040 1225 1130 1195 1215 1155 1170 1110z" fill="#666" />
      </g>

      <g transform="translate(900 210) scale(.33333)">
        <path d="M560 1270L996 1060V1190L640 1395z" fill="#5f5e6b" {...line} />
        <path d="M735 1325L830 1270 880 1255 960 1165 996 1150V1190L735 1338z" fill="#706f7e" />
        <path d="M583 1270L720 1225 640 1292 600 1290z" fill="#b9bcc8" {...line} />
        <SocketHead x={452} y={165} />
        <SocketHead x={230} y={295} />
        <path d="M158 337L603 80A523 302 60 0 1 1126 986L681 1243z" fill="url(#body)" {...line} />
        <path d="M785 875Q1000 745 1222 635L1226 650Q1000 770 785 900z" fill="url(#warm)" opacity=".75" />
        <path d="M789 992L1235 738V752L789 1008z" fill="#f6f7fb" {...line} />
        <Recessed x={1050} y={509} />
        <Recessed x={828} y={637} />
        <Thread x={773} y={1098} />
        <Thread x={995} y={970} />
        <ellipse cx="420" cy="790" rx="523" ry="302" transform="rotate(60 420 790)" fill="#5d5c66" {...line} />
        <g clipPath="url(#holeClip)">
          <rect x="220" y="540" width="400" height="500" fill="url(#hole)" />
          <g clipPath="url(#lower)">
            <path
              d="M150 500H700V1100H150zM341 550A260 150 60 0 0 601 1000A260 150 60 0 0 341 550z"
              fillRule="evenodd"
              fill="#f2f4ff"
              filter="url(#glow)"
            />
            <path d="M245 755L460 625M250 735L450 615" stroke="#e2e4f0" strokeWidth="3" />
          </g>
          <path d="M236 670L430 560V574L236 686z" fill="#e8eaf2" {...line} />
        </g>
        <ellipse cx="420" cy="790" rx="260" ry="150" transform="rotate(60 420 790)" fill="none" {...line} />
        <path d="M49 567L236 671V686L49 577zM605 886L789 990V1003L605 899z" fill="#fff" {...line} />
      </g>

      <g transform="translate(700 500) scale(.33333)">
        <path d="M550 358Q660 300 690 280 760 215 800 212 850 205 885 210L930 330 760 420 672 358Q600 345 550 358z" fill="url(#bronze)" {...line} />
        <path d="M670 295Q720 270 765 272M670 295Q700 285 740 290" fill="none" {...line} />

        <path d="M990 388L1100 322Q1190 390 1250 500 1290 570 1302 608V1045Q1290 1070 1250 1085L1130 1150 1040 1215 960 420z" fill="#3a302b" {...line} />
        <path d="M990 385L1100 322Q1190 390 1250 500 1290 570 1302 608L1222 658Q1200 600 1165 548L1125 535Q1075 450 990 385z" fill="url(#cream)" {...line} />
        <path d="M990 388Q1070 450 1125 535L1110 540Q1050 460 990 408z" fill="#cfc4b6" {...line} />
        <path d="M1222 658L1302 608V1045L1222 1087z" fill="#5e5c55" {...line} />
        <path d="M1150 560L1170 548 1222 645V658H1200z" fill="#e5dbcf" {...line} />
        <path d="M1150 560L1200 658V1085L1150 1130z" fill="#43372f" {...line} />
        <path d="M1200 658H1222V1087H1200z" fill="#584a41" {...line} />
        <path d="M1150 1130L1200 1087H1222L1302 1045Q1285 1070 1250 1090L1165 1135z" fill="#4a403a" {...line} />
        <path d="M1080 565L1095 525 1125 535 1135 532V1150H1125V700z" fill="#2a2420" {...line} />
        <path d="M1092 560V640M1105 540V670M1118 545V700M1148 560V1120" fill="none" stroke="#8b7d72" strokeWidth="3" />
        <path d="M1133 1070L1160 1045 1168 1060 1155 1080 1133 1088z" fill="#ded5c8" {...line} />

        <path d="M855 463L965 405Q1045 470 1085 560L1130 712 1052 755Q1010 640 950 550 905 490 855 463z" fill="url(#cream)" {...line} />
        <path d="M1052 755L1130 712V1145L1052 1187z" fill="#5f5d56" {...line} />
        <path d="M1052 1187L1130 1147Q1080 1200 1010 1225z" fill="#74695f" {...line} />

        <path
          d="M469 418Q540 345 672 358V462L617 443 612 550 622 570 903 731 912 722V618L905 605 848 575V463Q930 515 990 620 1030 690 1052 755V1187Q1000 1253 915 1253 800 1250 690 1158 560 1040 469 850z"
          fill="#4b3f39"
          {...line}
        />
        <path d="M617 443L680 478 912 618V722L903 731 622 570 612 550V450z" fill="#6a5e54" {...line} />
        <path d="M622 472L708 513 622 556z" fill="#45423e" {...line} />
        <path d="M708 513L908 622V722L630 562z" fill="url(#floor)" {...line} />
        <path d="M622 562L903 724" fill="none" stroke="#e2d8ca" strokeWidth="5" />

        <path d="M722 300Q728 285 750 292L980 155Q1060 190 1065 200 1075 220 1075 250L1102 322 855 463 830 480z" fill="#fdfdff" {...line} />
        <path d="M828 365L1068 222Q1075 280 1102 322L858 460Q835 410 828 365z" fill="url(#side)" {...line} />
        <path d="M815 340L1050 200M828 368L1068 228" fill="none" {...line} />
        <path d="M682 390Q715 375 722 305L800 350Q800 430 845 488V578L682 490z" fill="#5e5d69" {...line} />
        <path d="M722 300Q735 288 750 296L818 337Q830 348 828 368 830 420 856 462L845 490Q798 430 798 372L722 318z" fill="#d4d7ee" {...line} />
        <path d="M742 306L808 346Q812 400 838 455" fill="none" stroke="#ffffff" strokeWidth="8" />
        <path d="M800 368Q815 350 828 368M798 372Q800 345 818 337" fill="none" {...line} />
        <path d="M668 360L708 345Q708 370 682 392V490L668 480z" fill="#2f2824" {...line} />
        <path d="M845 575L850 468" {...line} />

        <ellipse cx="760" cy="803" rx="83" ry="48" transform="rotate(60 760 803)" fill="url(#bolt)" {...line} />
        <g {...engraved}>
          <text transform="translate(603 890) rotate(-112)" fontSize="122">
            U
          </text>
          <text transform="translate(668 1098) rotate(30)" fontSize="124">
            S
          </text>
          <text transform="translate(830 1190) rotate(12)" fontSize="122">
            M
          </text>
          <text transform="translate(975 1164) rotate(-28)" fontSize="124">
            C
          </text>
        </g>
        <ellipse cx="761" cy="1153" rx="49" ry="29" transform="rotate(60 761 1153)" fill="#b5aa9d" {...line} />
        <path d="M742 1130L770 1114M750 1170L786 1149" stroke="#efe6da" strokeWidth="7" />
      </g>
    </svg>
  );
}

function Triad() {
  return (
    <svg viewBox="0 0 60 56" className="h-[56px] w-[60px]" aria-hidden="true">
      <path d="M29 34V20" stroke="#1d6b20" strokeWidth="4" />
      <path d="M24.500 18L29 9l4.500 9q-4.500 4-9 0z" fill="#2f9a34" stroke="#124a14" strokeWidth=".7" />
      <path d="M29 33L14 41" stroke="#15159a" strokeWidth="4" />
      <path d="M7 45l8-9 4 8z" fill="#2a2ad8" stroke="#0c0c60" strokeWidth=".7" />
      <path d="M29 33l14 8" stroke="#b01c1c" strokeWidth="4" />
      <path d="M51 46L40 44l4-8z" fill="#e03030" stroke="#6a0c0c" strokeWidth=".7" />
      <path d="M26 0l3 4 3-4M29 4v4" stroke="#1d8a20" fill="none" />
      <path d="M2 42h5l-5 8h5" stroke="#1a1ad0" fill="none" />
      <path d="M51 42l5 9M56 42l-5 9" stroke="#e02828" fill="none" />
    </svg>
  );
}

const taskTabs = ["chat", "home", "library", "openFolder", "palette", "ball", "hand"];

function Viewport() {
  return (
    <main className="relative min-w-0 flex-1 overflow-hidden border-r border-[#3f4f66] bg-white">
      <Model />
      <div className="absolute bottom-[36px] left-[12px]">
        <Triad />
      </div>
      <p className="absolute bottom-[3px] left-[11px] text-[12px] leading-[13px] font-bold text-[#2a2a4c]">*Isometric</p>
      <div className="absolute top-[40px] right-0 flex flex-col">
        {taskTabs.map((k) => (
          <button
            key={k}
            type="button"
            aria-label={k}
            className={
              "flex h-6 w-[23px] items-center justify-center rounded-l-[4px] border-2 border-r-0 border-[#8587a0] " +
              (k === "ball" ? "bg-[#f1f2f8]" : "bg-[#b9bccf]")
            }
          >
            <Icon>{icons[k]}</Icon>
          </button>
        ))}
      </div>
    </main>
  );
}

function BottomBar() {
  return (
    <div className="flex h-4 shrink-0 items-start border-t border-black bg-[#e1e4ec] font-['Liberation_Sans',Arial,sans-serif]">
      <div className="flex h-full w-[68px] shrink-0 items-center justify-around border-r border-[#55565f] bg-[#a9abc4] px-[2px]">
        {["M1 0h1v8H1zM8 0v8L3 4z", "M7 0v8L2 4z", "M2 0v8l5-4z", "M1 0v8l5-4zM7 0h1v8H7z"].map((d, i) => (
          <button key={i} type="button" aria-label={"Tab navigation " + (i + 1)} className="flex h-[14px] w-[15px] items-center justify-center border border-[#8587a0]">
            <svg viewBox="0 0 9 8" className="h-2 w-[9px]" aria-hidden="true">
              <path d={d} fill="#73759a" />
            </svg>
          </button>
        ))}
      </div>
      <button type="button" className="h-[14px] w-[55px] shrink-0 border-r border-b border-[#55565f] bg-[#d8dcea] text-[12px] leading-none font-bold text-[#15151c]">
        Model
      </button>
      <button type="button" className="h-[13px] w-[103px] shrink-0 border-r-2 border-b-2 border-[#55565f] bg-[#b5b8ca] pr-[4px] text-[12px] leading-none text-[#15151c]">
        Motion Study 1
      </button>
    </div>
  );
}

function StatusBar() {
  return (
    <footer className="flex h-[18px] shrink-0 items-center border-t border-[#55596e] bg-gradient-to-b from-[#cdd0e2] to-[#b4b8cc] pr-[6px] pl-[2px] font-['Open_Sans',sans-serif] text-[11px] leading-none text-[#15151c]">
      <span>SolidWorks Premium 2013 x64 Edition</span>
      <span className="ml-auto pr-[6px]">Under Defined</span>
      <span className="border-l border-[#dfe1ee] py-[2px] pr-[5px] pl-[11px]">Editing Assembly</span>
      <span className="h-3 w-2 border-l border-[#dfe1ee]" />
      <span className="h-3 w-2 border-l border-[#dfe1ee]" />
      <span className="border-l border-[#dfe1ee] pl-[31px]">IPS</span>
      <button type="button" aria-label="Units" className="ml-[18px] flex h-3 w-2 rotate-180 items-center justify-center">
        <Caret />
      </button>
      <button type="button" aria-label="Quick tips" className="ml-[17px] flex h-[13px] w-[13px] items-center justify-center border border-[#35507a] bg-white text-[11px] leading-none font-bold text-[#0f9a2a]">
        ?
      </button>
      <button type="button" aria-label="Tags" className="ml-[51px]">
        <Icon className="h-[15px] w-[15px]">{icons.tag}</Icon>
      </button>
    </footer>
  );
}

export default function App() {
  return (
    <div className={"flex h-screen min-h-[640px] flex-col overflow-hidden bg-white " + sansUi}>
      <TitleBar />
      <div className="flex h-[74px] shrink-0">
        <Ribbon />
        <SideToolbars />
      </div>
      <TabRow />
      <div className="flex min-h-0 flex-1">
        <FeatureTree />
        <Viewport />
      </div>
      <BottomBar />
      <StatusBar />
    </div>
  );
}
